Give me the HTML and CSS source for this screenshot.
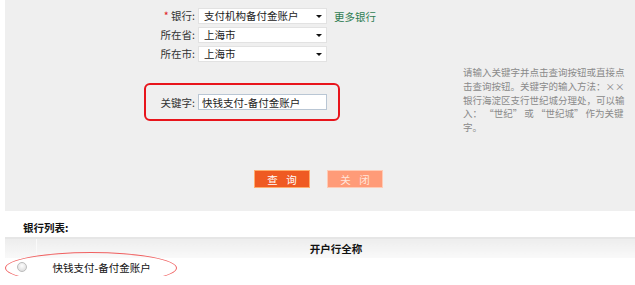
FILE: index.html
```html
<!DOCTYPE html>
<html lang="zh-CN">
<head>
    <meta charset="UTF-8">
    <title>选择开户银行</title>
    <link rel="stylesheet" href="styles.css">
</head>
<body>
    <div class="search-panel">
        <div class="search-top">
            <form class="bank-form">
                <div class="form-row">
                    <label><span class="required">*</span> 银行:</label>
                    <span class="select-wrap"><select><option>支付机构备付金账户</option></select></span>
                    <a href="#" class="more-link">更多银行</a>
                </div>
                <div class="form-row">
                    <label>所在省:</label>
                    <span class="select-wrap"><select><option>上海市</option></select></span>
                </div>
                <div class="form-row">
                    <label>所在市:</label>
                    <span class="select-wrap"><select><option>上海市</option></select></span>
                </div>
                <div class="keyword-box">
                    <label>关键字:</label>
                    <input type="text" value="快钱支付-备付金账户">
                </div>
            </form>
            <p class="help-text">请输入关键字并点击查询按钮或直接点击查询按钮。关键字的输入方法：××银行海淀区支行世纪城分理处，可以输入： “世纪” 或 “世纪城” 作为关键字。</p>
        </div>
        <div class="button-row">
            <button type="button" class="btn btn-primary">查 询</button>
            <button type="button" class="btn btn-disabled">关 闭</button>
        </div>
    </div>

    <div class="bank-list">
        <h3>银行列表:</h3>
        <table class="bank-table">
            <thead>
                <tr><th class="col-radio"></th><th>开户行全称</th></tr>
            </thead>
            <tbody>
                <tr class="picked">
                    <td class="col-radio"><span class="radio"></span><span class="ring"></span></td>
                    <td class="bank-name">快钱支付-备付金账户</td>
                </tr>
            </tbody>
        </table>
    </div>
</body>
</html>
```

FILE: styles.css
```css
body {
    margin: 0;
    font-family: "Noto Sans CJK SC", sans-serif;
    font-size: 10.5px;
    color: #333;
    background-color: white;
}

.search-panel {
    margin-left: 5px;
    height: 211px;
    background-color: #efefef;
    box-sizing: border-box;
    padding-top: 8px;
}

.search-top {
    display: flex;
    height: 154px;
}

.bank-form {
    width: 240px;
    margin-left: 139px;
}

.form-row {
    display: flex;
    align-items: center;
    height: 16px;
    margin-bottom: 3px;
}

.form-row label {
    width: 51px;
    text-align: right;
    margin-right: 3px;
    color: #333;
    line-height: 16px;
}

.required {
    color: #e02020;
}

.select-wrap {
    position: relative;
    display: inline-block;
    height: 16px;
}

.select-wrap::after {
    content: "";
    position: absolute;
    right: 5px;
    top: 7px;
    border-left: 3px solid transparent;
    border-right: 3px solid transparent;
    border-top: 3px solid #111;
}

select {
    appearance: none;
    -webkit-appearance: none;
    display: block;
    width: 129px;
    height: 16px;
    padding: 0 0 0 5px;
    border: 1px solid #e2e2e2;
    border-radius: 0;
    background-color: white;
    font-family: inherit;
    font-size: 10.5px;
    line-height: 14px;
    color: #222;
}

.more-link {
    margin-left: 7px;
    color: #2f7d52;
    text-decoration: none;
}

.keyword-box {
    display: flex;
    align-items: center;
    width: 192px;
    height: 16px;
    margin-top: 21px;
    padding: 9px 0;
    border: 2px solid #e8141b;
    border-radius: 6px;
}

.keyword-box label {
    width: 49px;
    text-align: right;
    margin-right: 3px;
}

.keyword-box input {
    width: 129px;
    height: 16px;
    box-sizing: border-box;
    padding: 0 0 0 3px;
    border: 1px solid #b9c6d4;
    font-family: inherit;
    font-size: 10.5px;
    color: #222;
}

.help-text {
    width: 164px;
    margin: 58px 0 0 79px;
    font-size: 9.5px;
    line-height: 13.75px;
    color: #8a8a8a;
}

.button-row {
    display: flex;
    justify-content: center;
    gap: 17px;
    margin-top: 8px;
    padding-right: 3px;
}

.btn {
    width: 56px;
    height: 18px;
    padding: 0;
    border-radius: 0;
    font-family: inherit;
    font-size: 10.5px;
    letter-spacing: 3px;
    text-indent: 3px;
    cursor: pointer;
}

.btn-primary {
    background-color: #ef5a22;
    border: 1px solid #ffad6e;
    color: white;
}

.btn-disabled {
    background-color: #ff9b78;
    border: 1px solid #ffcbb5;
    color: #ffe6dc;
}

.bank-list h3 {
    margin: 0;
    padding: 10px 0 0 23px;
    height: 13px;
    font-size: 10.5px;
    line-height: 13px;
    color: #111;
}

.bank-table {
    margin: 3px 0 0 5px;
    width: 630px;
    border-collapse: collapse;
}

.bank-table th {
    height: 19px;
    padding: 0;
    border-top: 2px solid #e6e6e6;
    background: linear-gradient(#ededed, #f9f9f9);
    font-size: 10.5px;
    color: #111;
    text-align: center;
}

.bank-table th.col-radio {
    width: 31px;
    border-right: 1px solid #fafafa;
}

.bank-table td {
    height: 18px;
    padding: 0;
}

.picked td.col-radio {
    position: relative;
}

.radio {
    display: block;
    width: 10px;
    height: 10px;
    margin-left: 12px;
    border-radius: 50%;
    border: 1px solid #bdbdbd;
    background: radial-gradient(circle at 50% 35%, #fdfdfd, #d6d6d6);
    box-sizing: border-box;
}

.ring {
    position: absolute;
    left: 0;
    top: -6px;
    width: 170px;
    height: 30px;
    border: 1px solid #f06060;
    border-radius: 50%;
}

.bank-name {
    padding-left: 16px !important;
    color: #111;
}
```
